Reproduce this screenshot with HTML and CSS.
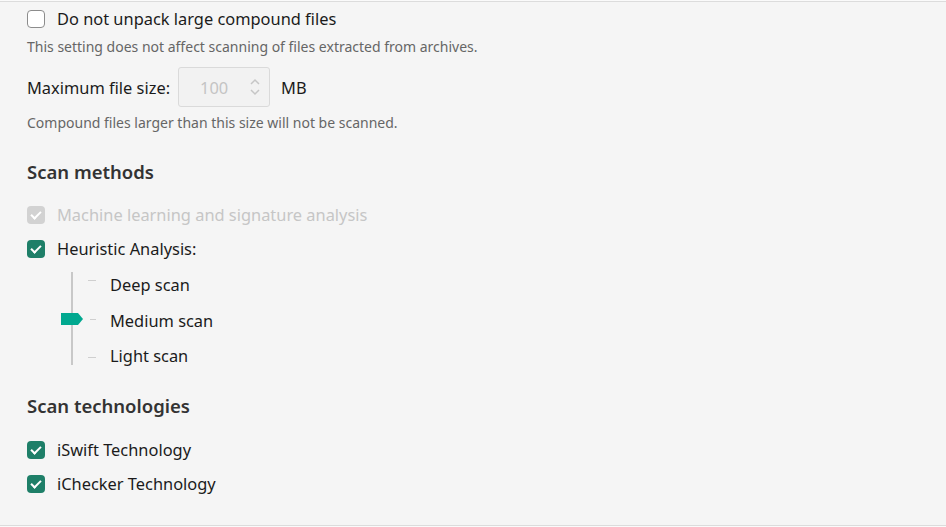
FILE: index.html
```html
<!DOCTYPE html>
<html lang="en">
<head>
    <meta charset="UTF-8">
    <title>Scan settings</title>
    <link rel="stylesheet" href="styles.css">
</head>
<body>

    <div class="page">
        <label class="check-row first">
            <span class="box"></span>
            <span>Do not unpack large compound files</span>
        </label>
        <p class="hint hint-first">This setting does not affect scanning of files extracted from archives.</p>

        <div class="size-row">
            <span>Maximum file size:</span>
            <div class="spin">
                <span class="spin-value">100</span>
                <svg class="spin-arrows" width="10" height="18" viewBox="0 0 10 18">
                    <path d="M1 6 L5 2 L9 6" fill="none" stroke="#c6c6c6" stroke-width="1.5"/>
                    <path d="M1 12 L5 16 L9 12" fill="none" stroke="#c6c6c6" stroke-width="1.5"/>
                </svg>
            </div>
            <span class="unit">MB</span>
        </div>
        <p class="hint hint-second">Compound files larger than this size will not be scanned.</p>

        <h2 class="section methods">Scan methods</h2>

        <label class="check-row ml disabled">
            <span class="box checked"></span>
            <span>Machine learning and signature analysis</span>
        </label>
        <label class="check-row heuristic">
            <span class="box checked"></span>
            <span>Heuristic Analysis:</span>
        </label>

        <div class="slider">
            <div class="track">
                <span class="thumb"></span>
            </div>
            <div class="ticks">
                <span class="tick"></span>
                <span class="tick short"></span>
                <span class="tick"></span>
            </div>
            <div class="levels">
                <span>Deep scan</span>
                <span>Medium scan</span>
                <span>Light scan</span>
            </div>
        </div>

        <h2 class="section techs">Scan technologies</h2>

        <label class="check-row iswift">
            <span class="box checked"></span>
            <span>iSwift Technology</span>
        </label>
        <label class="check-row ichecker">
            <span class="box checked"></span>
            <span>iChecker Technology</span>
        </label>
    </div>

</body>
</html>
```

FILE: styles.css
```css
html {
    background: #fafafa;
}
body {
    margin: 0;
    font-family: "Noto Sans", "Open Sans", sans-serif;
    font-size: 16.4px;
    color: #1b1b1b;
}
.page {
    margin-top: 1px;
    height: 523px;
    border-top: 1px solid #dcdcdc;
    border-bottom: 1px solid #dcdcdc;
    background: #f5f5f5;
    padding-left: 27px;
    display: flex;
    flex-direction: column;
    align-items: flex-start;
}
.check-row {
    display: flex;
    align-items: center;
    gap: 12px;
    height: 22px;
    line-height: 22px;
}
.box {
    width: 18px;
    height: 18px;
    box-sizing: border-box;
    border: 1.5px solid #8c8c8c;
    border-radius: 4px;
    background: #fff;
    position: relative;
}
.box.checked {
    border: none;
    background: #1e7f68;
}
.box.checked::after {
    content: "";
    position: absolute;
    left: 6px;
    top: 3px;
    width: 4px;
    height: 8px;
    border-right: 2.5px solid #fff;
    border-bottom: 2.5px solid #fff;
    transform: rotate(45deg);
}
.disabled {
    color: #c6c6c6;
}
.disabled .box.checked {
    background: #d2d2d2;
}
.hint {
    margin: 0;
    font-size: 14px;
    line-height: 18px;
    color: #666;
}
.first { margin-top: 6px; }
.hint-first { margin-top: 8px; }
.size-row {
    margin-top: 11px;
    display: flex;
    align-items: center;
}
.spin {
    margin-left: 8px;
    width: 92px;
    height: 40px;
    box-sizing: border-box;
    border: 1px solid #dadada;
    border-radius: 3px;
    background: #f2f2f2;
    display: flex;
    align-items: center;
    justify-content: space-between;
    padding: 0 9px 0 21px;
}
.spin-value {
    color: #c4c4c4;
}
.unit {
    margin-left: 11px;
}
.hint-second { margin-top: 7px; }
.section {
    margin: 0;
    font-size: 18.5px;
    font-weight: 600;
    line-height: 24px;
    color: #333;
}
.methods { margin-top: 28px; }
.ml { margin-top: 20px; }
.heuristic { margin-top: 12px; }
.slider {
    margin-top: 12px;
    margin-left: 34px;
    height: 93px;
    display: flex;
}
.track {
    width: 22px;
    position: relative;
}
.track::before {
    content: "";
    position: absolute;
    left: 10px;
    top: 0;
    bottom: 0;
    width: 2px;
    background: #c8c8c8;
}
.thumb {
    position: absolute;
    left: 0;
    top: 41px;
    width: 22px;
    height: 12px;
    background: #00a88f;
    clip-path: polygon(0 0, 17px 0, 22px 6px, 17px 12px, 0 12px);
}
.ticks {
    margin-left: 5px;
    width: 8px;
    padding-top: 8px;
    display: flex;
    flex-direction: column;
    align-items: flex-end;
    gap: 37.5px;
}
.tick {
    width: 8px;
    height: 1px;
    background: #cfcfcf;
}
.tick.short { width: 6px; }
.levels {
    margin-left: 14px;
    padding-top: 2px;
    display: flex;
    flex-direction: column;
    gap: 13.5px;
    line-height: 22px;
}
.techs { margin-top: 29px; }
.iswift { margin-top: 21px; }
.ichecker { margin-top: 12px; }
```
